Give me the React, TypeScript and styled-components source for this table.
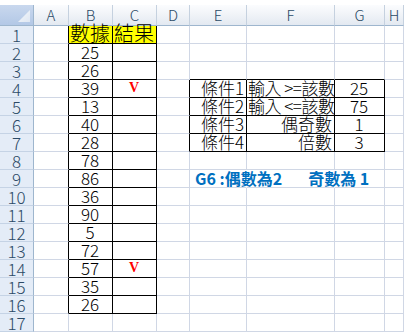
import React from 'react';
import styled, { createGlobalStyle } from 'styled-components';

const GlobalStyle = createGlobalStyle`
  html, body {
    margin: 0;
    padding: 0;
    background: #ffffff;
  }
`;

const GRID = '#d0d7e5';
const HEAD_LINE = '#9eb6ce';
const CELL_FONT = `"Noto Sans CJK TC", "Noto Sans", sans-serif`;

const columns = [
  { key: 'A', width: 35 },
  { key: 'B', width: 44 },
  { key: 'C', width: 44 },
  { key: 'D', width: 33 },
  { key: 'E', width: 57 },
  { key: 'F', width: 88 },
  { key: 'G', width: 50 },
  { key: 'H', width: 19 },
];

type Align = 'left' | 'center' | 'right';

interface CellData {
  text: string;
  align?: Align;
  fill?: string;
  size?: number;
  tight?: boolean;
  kind?: 'mark' | 'note';
}

const numbers = ['25', '26', '39', '13', '40', '28', '78', '86', '36', '90', '5', '72', '57', '35', '26'];

const cells: Record<string, CellData> = {
  B1: { text: '數據', align: 'center', fill: '#ffff00', size: 20 },
  C1: { text: '結果', align: 'center', fill: '#ffff00', size: 20 },
  C4: { text: 'V', kind: 'mark' },
  C14: { text: 'V', kind: 'mark' },
  E4: { text: '條件1', align: 'right' },
  E5: { text: '條件2', align: 'right' },
  E6: { text: '條件3', align: 'right' },
  E7: { text: '條件4', align: 'right' },
  F4: { text: '輸入 >=該數', align: 'left', tight: true },
  F5: { text: '輸入 <=該數', align: 'left', tight: true },
  F6: { text: '偶奇數', align: 'right' },
  F7: { text: '倍數', align: 'right' },
  G4: { text: '25', align: 'center' },
  G5: { text: '75', align: 'center' },
  G6: { text: '1', align: 'center' },
  G7: { text: '3', align: 'center' },
  E9: { text: 'G6 :偶數為2|奇數為 1', kind: 'note' },
};
numbers.forEach((n, i) => {
  cells[`B${i + 2}`] = { text: n, align: 'center' };
});

// bordered ranges: [firstCol, lastCol, firstRow, lastRow]
const boxes: [number, number, number, number][] = [
  [1, 2, 1, 16],
  [4, 6, 4, 7],
];

const inBox = (c: number, r: number) =>
  boxes.some(([c0, c1, r0, r1]) => c >= c0 && c <= c1 && r >= r0 && r <= r1);

// cells whose gridline is hidden under overflowing text
const hiddenRight = new Set(['E9', 'F9']);

const ROW_COUNT = 17;

const Sheet = styled.div`
  padding-top: 5px;
  width: 404px;
  font-family: ${CELL_FONT};
`;

const Grid = styled.div`
  display: grid;
  grid-template-columns: 34px ${columns.map((c) => `${c.width}px`).join(' ')};
  grid-template-rows: 21px repeat(${ROW_COUNT}, 18px);
  overflow: hidden;
  height: 327px;
`;

const Corner = styled.div`
  position: relative;
  box-sizing: border-box;
  background: linear-gradient(#c9d8ee, #b3c8e6);
  border-right: 1px solid ${HEAD_LINE};
  border-bottom: 1px solid ${HEAD_LINE};

  svg {
    position: absolute;
    right: 3px;
    bottom: 3px;
  }
`;

const ColHead = styled.div`
  box-sizing: border-box;
  display: flex;
  align-items: center;
  justify-content: center;
  background: linear-gradient(#fbfcfe 0%, #f1f4f8 45%, #e3e9f1 100%);
  border-right: 1px solid #c5d1df;
  border-bottom: 1px solid ${HEAD_LINE};
  color: #2b4a66;
  font-size: 15px;
  font-weight: 300;
  line-height: 20px;
`;

const RowHead = styled.div`
  box-sizing: border-box;
  display: flex;
  align-items: center;
  justify-content: center;
  background: #e4ecf7;
  border-right: 1px solid ${HEAD_LINE};
  border-bottom: 1px solid #c5d3e5;
  color: #2b4a66;
  font-size: 17px;
  font-weight: 300;
  line-height: 17px;
`;

const Cell = styled.div<{ $align: Align; $fill: string; $right: string; $bottom: string }>`
  position: relative;
  box-sizing: border-box;
  display: flex;
  align-items: center;
  justify-content: ${(p) =>
    p.$align === 'left' ? 'flex-start' : p.$align === 'right' ? 'flex-end' : 'center'};
  padding: 0 2px 0 1px;
  background: ${(p) => p.$fill};
  border-right: 1px solid ${(p) => p.$right};
  border-bottom: 1px solid ${(p) => p.$bottom};
  color: #000000;
  white-space: nowrap;
  overflow: visible;
`;

const Value = styled.span<{ $size: number; $tight: boolean }>`
  font-size: ${(p) => p.$size}px;
  font-weight: 300;
  line-height: 17px;
  letter-spacing: ${(p) => (p.$tight ? '-0.5px' : '0')};
  transform: translateY(${(p) => (p.$size > 18 ? -2 : -1.5)}px);
`;

const Mark = styled.span`
  color: #ff0000;
  font-family: "Liberation Serif", serif;
  font-weight: 700;
  font-size: 14px;
  line-height: 14px;
  transform: translateY(-1px);
`;

const Note = styled.span`
  position: absolute;
  left: 5px;
  top: 0;
  z-index: 2;
  color: #0070c0;
  font-weight: 700;
  font-size: 16px;
  line-height: 17px;
  white-space: nowrap;
`;

const NoteGap = styled.span`
  display: inline-block;
  width: 26px;
`;

const CornerMark = () => (
  <svg width="12" height="12" viewBox="0 0 12 12">
    <defs>
      <linearGradient id="cornerTri" x1="0" y1="0" x2="1" y2="1">
        <stop offset="0" stopColor="#f4f7fb" />
        <stop offset="1" stopColor="#dfe7f2" />
      </linearGradient>
    </defs>
    <polygon points="12,0 12,12 0,12" fill="url(#cornerTri)" />
  </svg>
);

const renderContent = (data?: CellData) => {
  if (!data) return null;
  if (data.kind === 'mark') return <Mark>{data.text}</Mark>;
  if (data.kind === 'note') {
    const [first, second] = data.text.split('|');
    return (
      <Note>
        {first}
        <NoteGap />
        {second}
      </Note>
    );
  }
  return (
    <Value $size={data.size ?? 17} $tight={!!data.tight}>
      {data.text}
    </Value>
  );
};

export default function App() {
  const rows = Array.from({ length: ROW_COUNT }, (_, i) => i + 1);

  return (
    <>
      <GlobalStyle />
      <Sheet>
        <Grid>
          <Corner>
            <CornerMark />
          </Corner>
          {columns.map((c) => (
            <ColHead key={c.key}>{c.key}</ColHead>
          ))}
          {rows.map((r) => (
            <React.Fragment key={r}>
              <RowHead>{r}</RowHead>
              {columns.map((col, ci) => {
                const id = `${col.key}${r}`;
                const data = cells[id];
                const boxed = inBox(ci, r);
                const right = hiddenRight.has(id)
                  ? '#ffffff'
                  : boxed || inBox(ci + 1, r)
                  ? '#000000'
                  : GRID;
                const bottom = boxed || inBox(ci, r + 1) ? '#000000' : GRID;
                return (
                  <Cell
                    key={id}
                    $align={data?.align ?? 'center'}
                    $fill={data?.fill ?? '#ffffff'}
                    $right={right}
                    $bottom={bottom}
                  >
                    {renderContent(data)}
                  </Cell>
                );
              })}
            </React.Fragment>
          ))}
        </Grid>
      </Sheet>
    </>
  );
}
